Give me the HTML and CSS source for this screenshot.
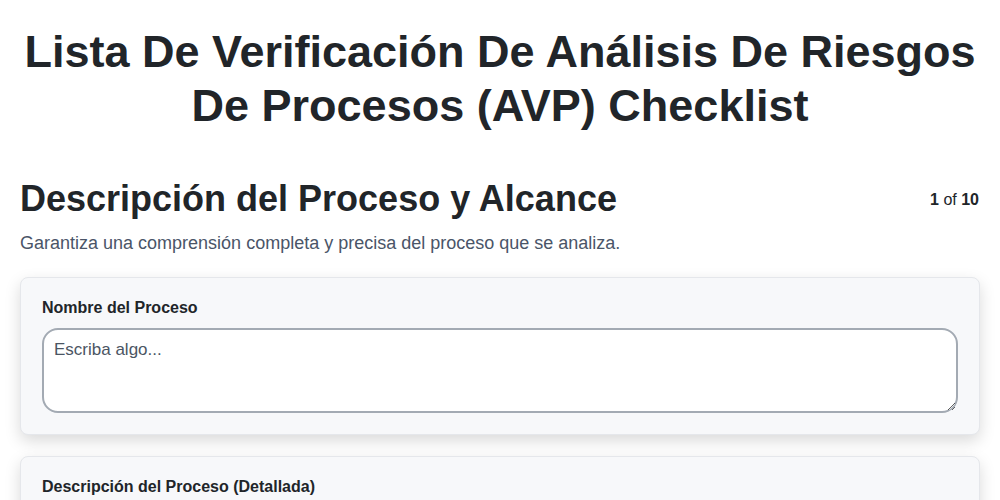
FILE: index.html
```html
<!DOCTYPE html>
<html lang="es">
<head>
    <meta charset="UTF-8">
    <meta name="viewport" content="width=device-width, initial-scale=1.0">
    <title>Lista De Verificación AVP</title>
    <link rel="stylesheet" href="styles.css">
</head>
<body>

<div class="page">
    <h1>Lista De Verificación De Análisis De Riesgos De Procesos (AVP) Checklist</h1>

    <div class="section-head">
        <h2>Descripción del Proceso y Alcance</h2>
        <div class="pager"><b>1</b> of <b>10</b></div>
    </div>
    <p class="section-desc">Garantiza una comprensión completa y precisa del proceso que se analiza.</p>

    <div class="card">
        <label for="nombre">Nombre del Proceso</label>
        <textarea id="nombre" placeholder="Escriba algo..."></textarea>
    </div>

    <div class="card">
        <label for="descripcion">Descripción del Proceso (Detallada)</label>
        <textarea id="descripcion" placeholder="Escriba algo..."></textarea>
    </div>
</div>

</body>
</html>
```

FILE: styles.css
```css
body {
    font-family: "Liberation Sans", Arial, sans-serif;
    margin: 0;
    padding: 0;
    background-color: #ffffff;
    color: #212529;
}

.page {
    padding: 0 20px 20px;
}

h1 {
    font-size: 45px;
    line-height: 1.2;
    text-align: center;
    margin: 25px 0 0;
}

.section-head {
    display: flex;
    justify-content: space-between;
    align-items: center;
    margin-top: 44px;
}

h2 {
    font-size: 36px;
    line-height: 1.2;
    margin: 0;
}

.pager {
    font-size: 16px;
    margin-right: 1px;
    margin-top: 2px;
}

.section-desc {
    font-size: 18px;
    color: #4a5568;
    margin: 13px 0 23px;
}

.card {
    background-color: #f7f8fa;
    border: 1px solid #e5e7eb;
    border-radius: 8px;
    padding: 21px;
    margin-bottom: 21px;
    box-shadow: 0 6px 16px rgba(0, 0, 0, 0.15);
}

.card label {
    display: block;
    font-size: 16px;
    font-weight: bold;
    line-height: 18px;
    margin-bottom: 11px;
}

.card textarea {
    display: block;
    box-sizing: border-box;
    width: 100%;
    height: 85px;
    padding: 10px;
    border: 2px solid #a3aab3;
    border-radius: 16px;
    background-color: #ffffff;
    font-family: "Liberation Sans", Arial, sans-serif;
    font-size: 17px;
    color: #212529;
}

.card textarea::placeholder {
    color: #4b5563;
    opacity: 1;
}
```
